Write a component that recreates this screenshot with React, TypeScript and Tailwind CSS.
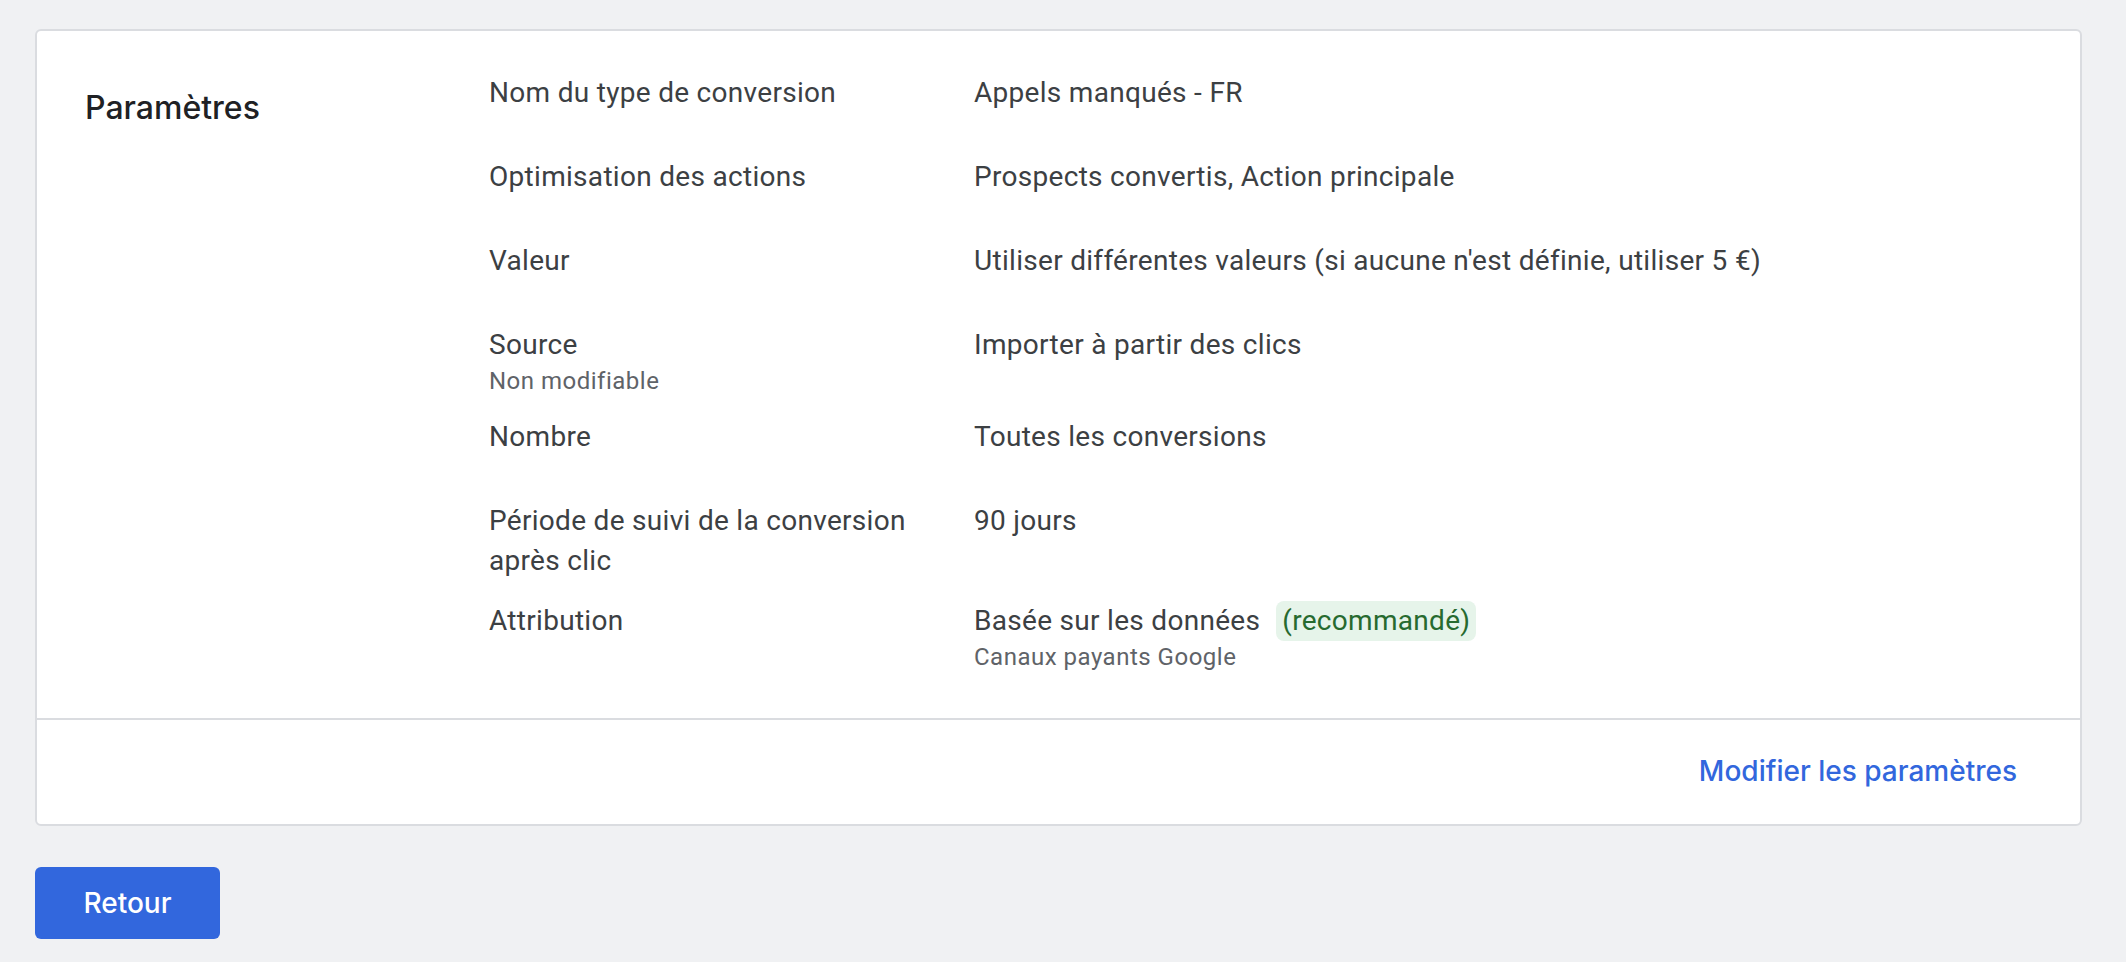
import React from "react";

type Row = {
  label: string;
  labelSub?: string;
  value: string;
  valueSub?: string;
  badge?: string;
};

const rows: Row[] = [
  { label: "Nom du type de conversion", value: "Appels manqués - FR" },
  { label: "Optimisation des actions", value: "Prospects convertis, Action principale" },
  { label: "Valeur", value: "Utiliser différentes valeurs (si aucune n'est définie, utiliser 5 €)" },
  { label: "Source", labelSub: "Non modifiable", value: "Importer à partir des clics" },
  { label: "Nombre", value: "Toutes les conversions" },
  { label: "Période de suivi de la conversion après clic", value: "90 jours" },
  {
    label: "Attribution",
    value: "Basée sur les données",
    badge: "(recommandé)",
    valueSub: "Canaux payants Google",
  },
];

const roboto = "font-['Roboto','Liberation_Sans',sans-serif]";
const gsans = "font-['Inter','Open_Sans','Liberation_Sans',sans-serif]";

export default function App() {
  return (
    <div className="min-h-screen bg-[#f0f1f3] pl-[35px] pr-[44px] pt-[29px] pb-[24px]">
      <div className="rounded-[6px] border-2 border-[#dadce0] bg-white">
        <div className="flex pl-[48px] pt-[42px] pb-[25px]">
          <div className="w-[404px] shrink-0">
            <h2 className={`${gsans} mt-[15px] text-[32px] leading-[40px] font-medium text-[#202124]`}>
              Paramètres
            </h2>
          </div>
          <div className="flex-1">
            {rows.map((r) => (
              <div
                key={r.label}
                className={`${roboto} grid grid-cols-[485px_1fr] min-h-[84px] pb-[20px] text-[28px] leading-[40px] tracking-[0.3px] text-[#3c4043]`}
              >
                <div className="w-[450px]">
                  <div>{r.label}</div>
                  {r.labelSub && (
                    <div className="text-[24px] leading-[32px] tracking-[0.5px] text-[#5f6368]">{r.labelSub}</div>
                  )}
                </div>
                <div>
                  <div className="flex items-center">
                    <span>{r.value}</span>
                    {r.badge && (
                      <span className="ml-[16px] rounded-[8px] bg-[#e6f4ea] px-[6px] text-[#276a2f]">
                        {r.badge}
                      </span>
                    )}
                  </div>
                  {r.valueSub && (
                    <div className="text-[24px] leading-[32px] tracking-[0.5px] text-[#5f6368]">{r.valueSub}</div>
                  )}
                </div>
              </div>
            ))}
          </div>
        </div>
        <div className="flex h-[106px] items-center justify-end border-t-2 border-[#dadce0] pr-[47px] pb-[3px]">
          <button
            className={`${gsans} h-[72px] rounded-[6px] px-[16px] text-[28px] font-medium text-[#3267dd]`}
          >
            Modifier les paramètres
          </button>
        </div>
      </div>
      <button
        className={`${gsans} mt-[41px] flex h-[72px] w-[185px] items-center justify-center rounded-[6px] bg-[#3267dd] text-[28px] font-medium text-white`}
      >
        Retour
      </button>
    </div>
  );
}
